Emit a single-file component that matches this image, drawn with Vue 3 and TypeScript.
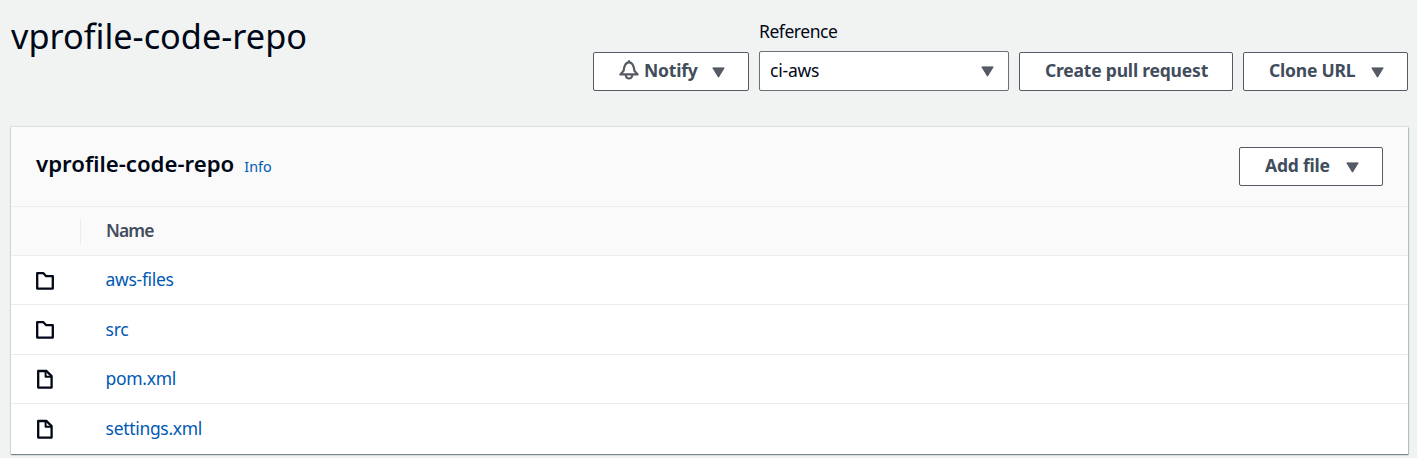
<script setup lang="ts">
interface RepoEntry {
  name: string
  kind: 'folder' | 'file'
}

const repository = 'vprofile-code-repo'
const entries: RepoEntry[] = [
  { name: 'aws-files', kind: 'folder' },
  { name: 'src', kind: 'folder' },
  { name: 'pom.xml', kind: 'file' },
  { name: 'settings.xml', kind: 'file' },
]
</script>

<template>
  <main class="page">
    <header class="page-header">
      <h1 class="title">{{ repository }}</h1>
      <div class="actions">
        <button class="btn notify">
          <svg class="bell" width="20" height="20" viewBox="0 0 20 20">
            <path d="M1.4 14.4h17.2L15.4 10.8C14.8 6 13.5 2.4 10 2.4S5.2 6 4.6 10.8zM10 2.4V.2M6.6 14.8c.4 2.5 1.8 3.7 3.4 3.7s3-1.2 3.4-3.7" />
          </svg>
          <span class="btn-text">Notify</span>
          <svg class="caret" width="13" height="11" viewBox="0 0 13 11"><path d="M.8.9h11.4L6.5 10.2z" /></svg>
        </button>
        <div class="field">
          <label class="label">Reference</label>
          <div class="select">
            <span class="select-text">ci-aws</span>
            <svg class="caret" width="13" height="11" viewBox="0 0 13 11"><path d="M.8.9h11.4L6.5 10.2z" /></svg>
          </div>
        </div>
        <button class="btn pull"><span class="btn-text">Create pull request</span></button>
        <button class="btn clone">
          <span class="btn-text">Clone URL</span>
          <svg class="caret" width="13" height="11" viewBox="0 0 13 11"><path d="M.8.9h11.4L6.5 10.2z" /></svg>
        </button>
      </div>
    </header>

    <section class="panel">
      <div class="panel-header">
        <h2 class="panel-title">{{ repository }}</h2>
        <a class="info">Info</a>
        <button class="btn add">
          <span class="btn-text">Add file</span>
          <svg class="caret" width="13" height="11" viewBox="0 0 13 11"><path d="M.8.9h11.4L6.5 10.2z" /></svg>
        </button>
      </div>
      <div class="columns">
        <span class="icon-column"></span>
        <span class="name-column">Name</span>
      </div>
      <div v-for="entry in entries" :key="entry.name" class="row">
        <span class="icon-cell">
          <svg v-if="entry.kind === 'folder'" class="entry-icon" width="20" height="20" viewBox="0 0 20 20">
            <path d="M2.2 2.2h6.2L11.2 5.2h6.6v12.4H2.2z" />
          </svg>
          <svg v-else class="entry-icon" width="20" height="20" viewBox="0 0 20 20">
            <path d="M3.2 2h8.3l5.1 5.1v11.5H3.2z" />
            <path class="fold" d="M10.6 2.2v5.6h5.8" />
          </svg>
        </span>
        <a class="link">{{ entry.name }}</a>
      </div>
    </section>
  </main>
</template>

<style>
body {
  background: #f2f3f3;
  overflow: hidden;
}
</style>

<style scoped>
.page {
  box-sizing: border-box;
  width: 1417px;
  height: 458px;
  padding: 0 9px 0 11px;
  background: #f1f3f3;
  color: #000716;
  font-family: "Noto Sans", "Open Sans", sans-serif;
  font-size: 17.5px;
}
.page-header {
  display: flex;
  justify-content: space-between;
  height: 127px;
}
.title {
  margin: 12px 0 0;
  font-size: 34.3px;
  line-height: 47px;
  font-weight: 400;
  white-space: nowrap;
}
.actions {
  display: flex;
  align-items: flex-end;
  gap: 10px;
  height: 91px;
}
.btn {
  box-sizing: border-box;
  display: flex;
  align-items: center;
  height: 39px;
  padding: 0 25px 2px;
  border: 1px solid #545b64;
  border-radius: 2px;
  background: #fff;
  color: #414d5c;
  font-family: inherit;
  font-size: 17.5px;
  font-weight: 700;
  line-height: 24px;
  letter-spacing: -0.2px;
  white-space: nowrap;
}
.btn-text {
  margin-top: -2px;
}
.btn .caret {
  margin: 3px -2px 0 auto;
}
.notify .caret,
.clone .caret,
.add .caret {
  margin-right: -1.5px;
}
.caret {
  flex: none;
}
.caret path {
  fill: #545b64;
  stroke: #545b64;
  stroke-width: 1;
  stroke-linejoin: round;
}
.notify { width: 156px; }
.pull { width: 214px; }
.clone { width: 165px; }
.bell {
  flex: none;
  margin: -1px 5px 0 0;
}
.bell path {
  fill: none;
  stroke: #545b64;
  stroke-width: 2.2;
  stroke-linejoin: round;
}
.label {
  display: block;
  height: 32px;
  margin-top: -1px;
  line-height: 24px;
  letter-spacing: -0.45px;
}
.field {
  width: 250px;
  height: 71px;
}
.select {
  box-sizing: border-box;
  display: flex;
  align-items: center;
  justify-content: space-between;
  height: 40px;
  padding: 0 14px 2px 10px;
  border: 1px solid #687078;
  border-radius: 2px;
  background: #fff;
}
.select .caret {
  margin-top: 2px;
}
.select-text {
  letter-spacing: -0.2px;
}
.panel {
  height: 327px;
  background: #fff;
  box-shadow: 0 0 1px 1px rgba(0, 28, 36, 0.08), 1px 1px 1px 0 rgba(0, 28, 36, 0.12), 0 1px 1px 0 rgba(0, 28, 36, 0.38);
}
.panel-header {
  box-sizing: border-box;
  display: flex;
  height: 80px;
  padding: 20px 25px 0;
  border-bottom: 1px solid #eaeded;
  background: #fafafa;
}
.panel-title {
  margin: 0 10px 0 0;
  font-size: 22.2px;
  line-height: 33px;
  font-weight: 600;
}
.info {
  font-size: 14.3px;
  line-height: 40px;
  color: #0059b3;
}
.add {
  width: 144px;
  margin-left: auto;
}
.columns {
  box-sizing: border-box;
  display: flex;
  align-items: center;
  height: 49px;
  border-bottom: 1px solid #eaeded;
  background: #fafafa;
  color: #414d5c;
  font-weight: 650;
}
.icon-column {
  box-sizing: border-box;
  width: 70px;
  height: 25px;
  border-right: 1px solid #eaeded;
}
.name-column {
  margin: -2px 0 0 25px;
  letter-spacing: -0.9px;
}
.row {
  box-sizing: border-box;
  display: flex;
  align-items: center;
  height: 49.4px;
  border-bottom: 1px solid #eaeded;
}
.row:last-child {
  border-bottom: 0;
}
.icon-cell {
  display: flex;
  width: 70.6px;
  margin: 1px 0 0 24px;
}
.entry-icon path {
  fill: none;
  stroke: #000716;
  stroke-width: 2.3;
  stroke-linejoin: round;
}
.entry-icon .fold {
  stroke-width: 2;
}
.link {
  margin-top: -2px;
  color: #0059b3;
  letter-spacing: -0.32px;
}
</style>
